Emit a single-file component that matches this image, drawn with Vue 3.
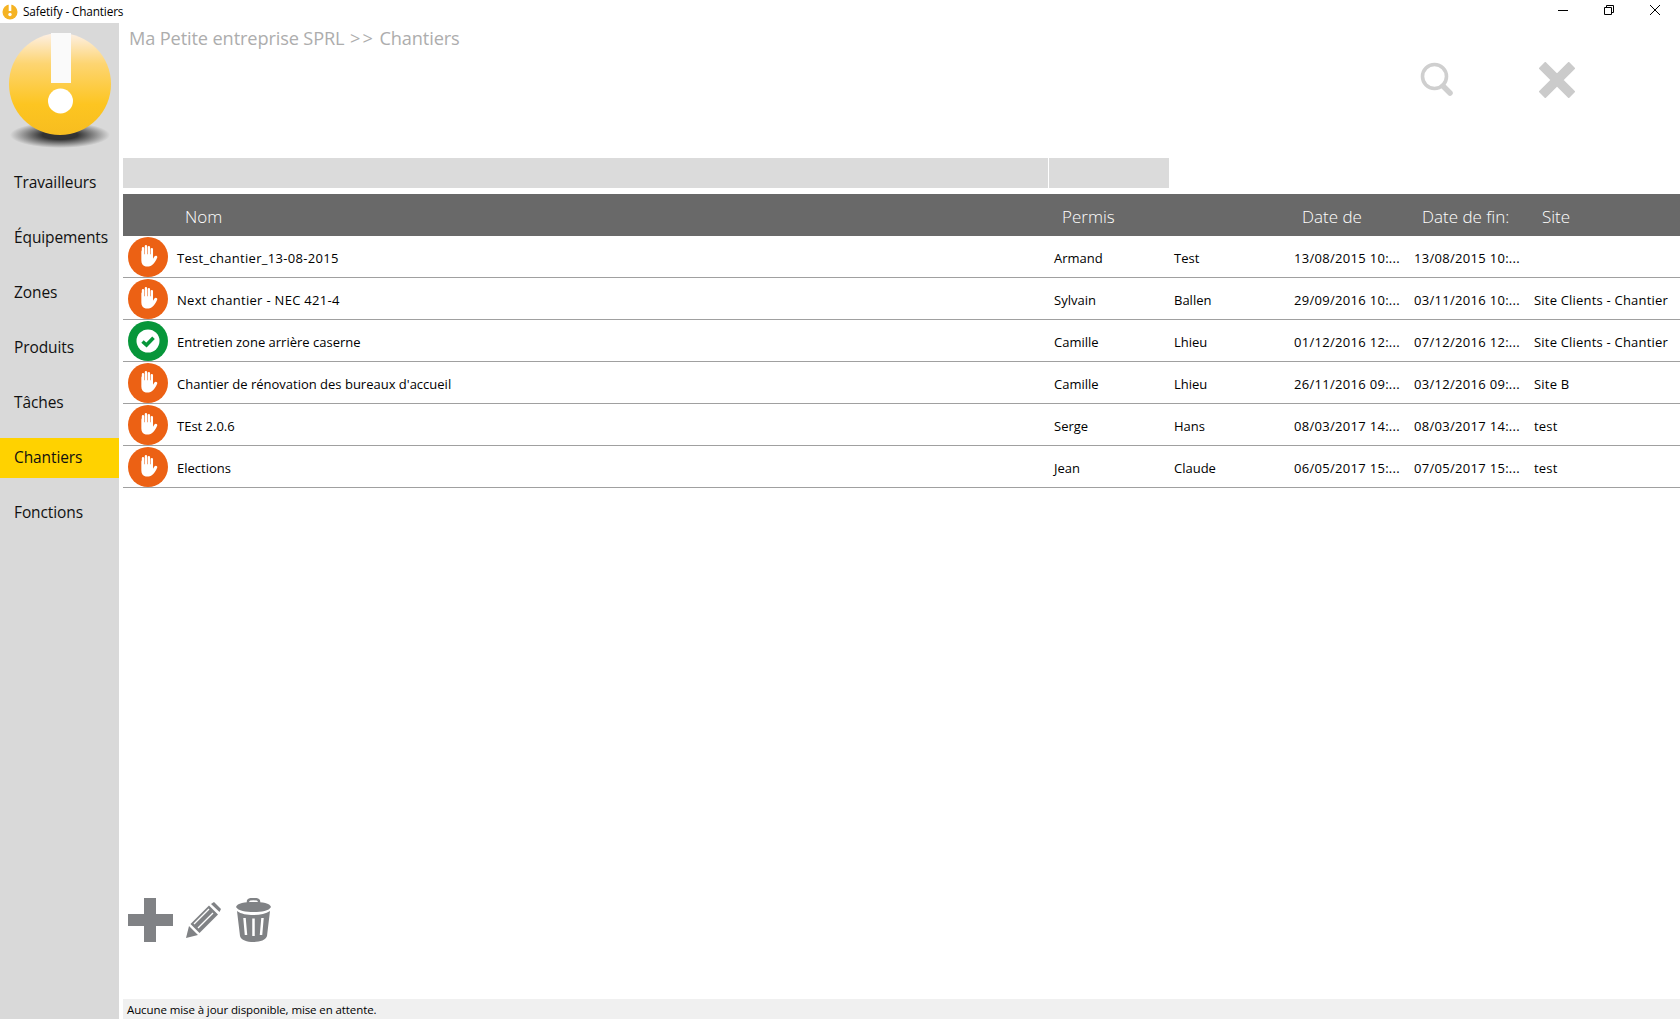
<script setup>
const navItems = [
  { label: 'Travailleurs' },
  { label: 'Équipements' },
  { label: 'Zones' },
  { label: 'Produits' },
  { label: 'Tâches' },
  { label: 'Chantiers', active: true },
  { label: 'Fonctions' },
]
const rows = [
  { s: 'stop', nom: 'Test_chantier_13-08-2015', num: true, p: 'Armand', n: 'Test', d1: '13/08/2015 10:...', d2: '13/08/2015 10:...', site: '' },
  { s: 'stop', nom: 'Next chantier - NEC 421-4', num: true, p: 'Sylvain', n: 'Ballen', d1: '29/09/2016 10:...', d2: '03/11/2016 10:...', site: 'Site Clients - Chantier' },
  { s: 'ok', nom: 'Entretien zone arrière caserne', p: 'Camille', n: 'Lhieu', d1: '01/12/2016 12:...', d2: '07/12/2016 12:...', site: 'Site Clients - Chantier' },
  { s: 'stop', nom: "Chantier de rénovation des bureaux d'accueil", p: 'Camille', n: 'Lhieu', d1: '26/11/2016 09:...', d2: '03/12/2016 09:...', site: 'Site B' },
  { s: 'stop', nom: 'TEst 2.0.6', p: 'Serge', n: 'Hans', d1: '08/03/2017 14:...', d2: '08/03/2017 14:...', site: 'test' },
  { s: 'stop', nom: 'Elections', p: 'Jean', n: 'Claude', d1: '06/05/2017 15:...', d2: '07/05/2017 15:...', site: 'test' },
]
</script>

<template>
  <div class="app">
    <div class="titlebar">
      <svg class="tb-logo" width="18" height="18" viewBox="0 0 18 18">
        <circle cx="9" cy="9" r="7.5" fill="#f5b323" />
        <rect x="7.7" y="1" width="2.6" height="7" fill="#fff" />
        <circle cx="9" cy="11.5" r="1.7" fill="#fff" />
      </svg>
      <span class="tb-title">Safetify - Chantiers</span>
      <div class="win">
        <svg width="12" height="12" viewBox="0 0 12 12"><path d="M1 6.5H11" stroke="#000" fill="none" /></svg>
        <svg width="12" height="12" viewBox="0 0 12 12"><path d="M1.5 3.5h7v7h-7zM3.5 3.5v-2h7v7h-2" stroke="#000" fill="none" /></svg>
        <svg width="12" height="12" viewBox="0 0 12 12"><path d="M1 1L11 11M11 1L1 11" stroke="#000" fill="none" /></svg>
      </div>
    </div>
    <div class="body">
      <aside class="sidebar">
        <svg class="logo" width="119" height="130" viewBox="0 0 119 130">
          <defs>
            <linearGradient id="ball" x1="0" y1="0" x2="0" y2="1">
              <stop offset="0" stop-color="#fdf0e6" />
              <stop offset="0.3" stop-color="#fdd572" />
              <stop offset="0.7" stop-color="#fdc521" />
              <stop offset="1" stop-color="#f7bd1f" />
            </linearGradient>
            <radialGradient id="shade">
              <stop offset="0.35" stop-color="#333" />
              <stop offset="1" stop-color="#333" stop-opacity="0" />
            </radialGradient>
          </defs>
          <ellipse cx="60" cy="112" rx="50" ry="13" fill="url(#shade)" />
          <circle cx="60" cy="61" r="51" fill="url(#ball)" />
          <rect x="51" y="10" width="20" height="50" fill="#fafafa" />
          <circle cx="60.5" cy="78" r="12.5" fill="#fff" />
        </svg>
        <nav class="nav">
          <div v-for="i in navItems" :key="i.label" class="nav-item" :class="{ active: i.active }">{{ i.label }}</div>
        </nav>
      </aside>
      <main class="main">
        <header class="top">
          <div class="crumb">Ma Petite entreprise SPRL <span class="sep">&gt;&gt;</span> Chantiers</div>
          <div class="tools">
            <svg width="34" height="36" viewBox="0 0 34 36">
              <circle cx="14.5" cy="14.5" r="12" stroke="#cfcfcf" stroke-width="3.6" fill="none" />
              <path d="M23 24L30 31" stroke="#cfcfcf" stroke-width="5.500" stroke-linecap="round" />
            </svg>
            <svg width="36" height="36" viewBox="0 0 36 36">
              <path d="M5 5L31 31M31 5L5 31" stroke="#cbcbcb" stroke-width="10.500" stroke-linecap="square" transform="translate(18 18) scale(.9) translate(-18 -18)" />
            </svg>
          </div>
        </header>
        <div class="filters"><div class="f1"></div><div class="f2"></div></div>
        <div class="thead">
          <span></span>
          <span>Nom</span>
          <span>Permis</span>
          <span></span>
          <span>Date de</span>
          <span>Date de fin:</span>
          <span>Site</span>
        </div>
        <div v-for="r in rows" :key="r.nom" class="row">
          <div class="cell-icon">
            <svg v-if="r.s === 'stop'" width="40" height="40" viewBox="0 0 40 40">
              <circle cx="20" cy="20" r="20" fill="#ec6114" />
              <path transform="translate(0 1.500) scale(.92)" d="M15 19V10.5a1.3 1.3 0 0 1 2.6 0V17h.6V8.5a1.3 1.3 0 0 1 2.6 0V17h.6V9.5a1.3 1.3 0 0 1 2.6 0V17h.6v-5.5a1.3 1.3 0 0 1 2.6 0V22l1.5-2.5c1-1.6 3.8-.6 3 1.3-1.4 3.3-3.4 6.2-5.5 8-2 1.5-4.5 2-7 1.5-3-.6-4.7-3-4.7-6.5V14a1.3 1.3 0 0 1 2.6 0z" fill="#fff" />
            </svg>
            <svg v-else width="40" height="40" viewBox="0 0 40 40">
              <circle cx="20" cy="20" r="20" fill="#07963a" />
              <circle cx="20" cy="20" r="11.500" fill="#fff" />
              <path d="M14.500 20.500L18.500 24L25.500 16.800" stroke="#07963a" stroke-width="3.600" fill="none" />
            </svg>
          </div>
          <span :class="{ num: r.num }">{{ r.nom }}</span>
          <span>{{ r.p }}</span>
          <span>{{ r.n }}</span>
          <span class="date">{{ r.d1 }}</span>
          <span class="date">{{ r.d2 }}</span>
          <span class="site">{{ r.site }}</span>
        </div>
        <div class="spacer"></div>
        <div class="actions">
          <svg class="a-plus" width="45" height="44" viewBox="0 0 45 44"><path d="M16 0H28V16H45V28H28V44H16V28H0V16H16z" fill="#808285" /></svg>
          <svg class="a-pencil" width="36" height="36" viewBox="0 0 36 36">
            <path d="M1 35L4 23L13 32zM5.5 21L24 2.5L33 11.5L14.5 30z" fill="#808285" />
            <path d="M9 21L24 6M13 25L28 10" stroke="#fff" stroke-width="1.4" />
            <path d="M26 1L29 -1L36 6L34.500 9z" fill="#808285" />
          </svg>
          <svg class="a-trash" width="37" height="44" viewBox="0 0 37 44">
            <path d="M13 6V3.500C13 1.500 15 1 18.500 1S24 1.500 24 3.500V6" stroke="#808285" stroke-width="2.500" fill="none" />
            <path d="M1 9C2 5 10 4 18.500 4S35 5 36 9C34 13 26 14 18.500 14S3 13 1 9z" fill="#808285" />
            <path d="M2 13C6 16 12 17 18.500 17S31 16 35 13L32 38C31 42 25 44 18.500 44S6 42 5 38z" fill="#808285" />
            <path d="M9.500 20L11 37M18.500 20.500V38M27.500 20L26 37" stroke="#fff" stroke-width="2.500" />
          </svg>
        </div>
        <div class="status">Aucune mise à jour disponible, mise en attente.</div>
      </main>
    </div>
  </div>
</template>

<style>
body { background: #fff; }
</style>

<style scoped>
.app {
  width: 1680px;
  height: 1019px;
  display: flex;
  flex-direction: column;
  overflow: hidden;
  background: #fff;
  font-family: "Open Sans", "Noto Sans", sans-serif;
  color: #000;
}
.titlebar {
  height: 23px;
  display: flex;
  align-items: center;
  flex: none;
}
.tb-logo { margin-left: 1px; }
.tb-title { margin-left: 4px; margin-top: -1px; font-size: 11.8px; letter-spacing: -0.15px; }
.win {
  margin-left: auto;
  display: flex;
  gap: 34px;
  padding-right: 19px;
  margin-top: -3px;
}
.body { flex: 1; display: flex; min-height: 0; }
.sidebar {
  width: 119px;
  flex: none;
  background: #d9d9d9;
  display: flex;
  flex-direction: column;
}
.logo { flex: none; display: block; }
.nav {
  margin-top: 10px;
  display: flex;
  flex-direction: column;
  gap: 15px;
}
.nav-item {
  height: 40px;
  line-height: 38px;
  padding-left: 14px;
  font-size: 15.5px;
  letter-spacing: -0.1px;
  color: #111;
}
.nav-item.active { background: #ffd200; }
.main {
  flex: 1;
  min-width: 0;
  padding-left: 4px;
  display: flex;
  flex-direction: column;
}
.top {
  height: 135px;
  flex: none;
  display: flex;
  justify-content: space-between;
  align-items: flex-start;
}
.crumb {
  margin: 3px 0 0 6px;
  font-size: 18.2px;
  letter-spacing: -0.13px;
  color: #adadad;
}
.sep { letter-spacing: 2px; margin-left: 1px; }
.tools {
  display: flex;
  gap: 85px;
  padding: 39px 105px 0 0;
}
.filters { display: flex; gap: 1px; height: 30px; flex: none; }
.f1 { width: 925px; background: #dbdbdb; }
.f2 { width: 120px; background: #dbdbdb; }
.thead, .row {
  display: grid;
  grid-template-columns: 54px 877px 120px 120px 120px 120px 1fr;
  align-items: center;
}
.thead {
  margin-top: 6px;
  height: 42px;
  flex: none;
  background: #696969;
  color: #fff;
  font-size: 17px;
  font-weight: 300;
  padding-top: 2px;
  box-sizing: border-box;
}
.thead span { padding-left: 8px; }
.row {
  height: 42px;
  flex: none;
  box-sizing: border-box;
  border-bottom: 1px solid #a0a0a0;
  font-size: 13px;
}
.row > span { white-space: nowrap; padding-top: 2px; }
.row .num { letter-spacing: 0.3px; }
.row .date { letter-spacing: 0.3px; }
.row .site { letter-spacing: 0.2px; }
.cell-icon { display: flex; padding-left: 5px; height: 40px; }
.spacer { flex: 1; }
.actions {
  flex: none;
  display: flex;
  align-items: flex-start;
  padding-left: 5px;
  height: 101px;
}
.a-pencil { margin: 5px 0 0 12px; overflow: visible; }
.a-trash { margin-left: 14px; }
.status {
  height: 20px;
  flex: none;
  background: #f0f0f0;
  font-size: 11.5px;
  line-height: 21px;
  padding-left: 4px;
  letter-spacing: -0.1px;
}
</style>
